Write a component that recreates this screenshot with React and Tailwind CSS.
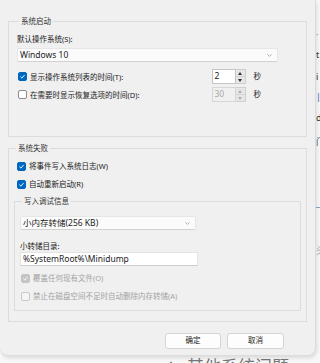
import { ChevronDown } from "lucide-react";

const font = "font-['Noto_Sans','Noto_Sans_CJK_SC',sans-serif]";

function Check({ checked, disabled }) {
  const box = checked
    ? disabled
      ? "bg-[#c4c4c4] border-[#c4c4c4]"
      : "bg-[#0067c0] border-[#0067c0]"
    : disabled
      ? "bg-[#f5f5f5] border-[#c8c8c8]"
      : "bg-white border-[#8a8a8a]";
  return (
    <span className={`flex h-[9px] w-[9px] shrink-0 items-center justify-center rounded-[2px] border ${box}`}>
      {checked && (
        <svg viewBox="0 0 10 10" className="h-[7px] w-[7px]">
          <path d="M2 5.2 L4.2 7.3 L8 2.8" fill="none" stroke="white" strokeWidth="1.3" />
        </svg>
      )}
    </span>
  );
}

function CheckRow({ label, checked, disabled, className = "" }) {
  return (
    <div className={`flex h-[10px] items-center gap-[3px] ${className}`}>
      <Check checked={checked} disabled={disabled} />
      <span className={`text-[7.5px] leading-[10px] ${disabled ? "text-[#a3a3a3]" : "text-[#1b1b1b]"}`}>{label}</span>
    </div>
  );
}

function Spin({ value, disabled }) {
  return (
    <div className="flex h-[15px]">
      <div
        className={`flex w-[24px] items-center border px-[2px] text-[8.5px] ${
          disabled ? "border-[#d6d6d6] bg-[#f0f0f0] text-[#a8a8a8]" : "border-[#c5c5c5] bg-white text-[#1b1b1b]"
        }`}
      >
        {value}
      </div>
      <div className="flex w-[10px] flex-col border border-l-0 border-[#cfcfcf] bg-[#e6e6e6]">
        <div className="flex flex-1 items-center justify-center border-b border-[#d4d4d4]">
          <span className={`h-0 w-0 border-x-[2.5px] border-b-[3px] border-x-transparent ${disabled ? "border-b-[#b0b0b0]" : "border-b-[#333]"}`} />
        </div>
        <div className="flex flex-1 items-center justify-center">
          <span className={`h-0 w-0 border-x-[2.5px] border-t-[3px] border-x-transparent ${disabled ? "border-t-[#b0b0b0]" : "border-t-[#333]"}`} />
        </div>
      </div>
    </div>
  );
}

function Select({ value, width }) {
  return (
    <div className={`flex h-[14px] ${width} items-center justify-between rounded-[2px] border border-[#e6e6e6] border-b-[#d2d2d2] bg-[#fbfbfb] pl-[2px] pr-[4px]`}>
      <span className="text-[8.5px] leading-none text-[#1b1b1b]">{value}</span>
      <ChevronDown className="h-[7px] w-[7px] text-[#777]" strokeWidth={2} />
    </div>
  );
}

function Legend({ children }) {
  return <legend className="ml-[2px] px-[2px] text-[7.5px] leading-[10px] text-[#333]">{children}</legend>;
}

export default function App() {
  return (
    <div className={`relative h-[363px] w-[320px] overflow-hidden bg-[#f8f8f8] ${font}`}>
      {/* window behind the dialog */}
      <div className="flex h-[358px]">
        <div className="w-[316px]" />
        <div className="flex w-[4px] flex-col overflow-hidden text-[9px] leading-[10px]">
          <span className="mt-[30px] text-[#999]">·</span>
          <span className="mt-[10px] text-[#333]">t</span>
          <span className="mt-[12px] text-[#333]">i</span>
          <span className="mt-[10px] text-[#2b6cb0]">|</span>
          <span className="mt-[11px] text-[#333]">d</span>
          <span className="mt-[14px] text-[#3a5a80]">门</span>
          <span className="mt-[60px] h-[1px] w-full bg-[#8aa4c0]" />
          <span className="mt-[38px] text-[#aaa]">头</span>
        </div>
      </div>
      <div className="ml-[165px] flex items-start gap-[10px] text-[#777]">
        <span className="text-[14px] leading-[18px]">✲</span>
        <span className="text-[17px] leading-[18px]">其他系统问题</span>
      </div>

      {/* dialog */}
      <div className="absolute left-0 top-0 flex h-[356px] w-[316px] flex-col rounded-b-[8px] border-r border-b border-[#dcdcdc] bg-[#f0f0f0] px-[8px] pt-[16px] shadow-[1px_2px_4px_rgba(0,0,0,0.12)]">
        <fieldset className="border border-[#dcdcdc] pb-[34px] pl-[8px]">
          <Legend>系统启动</Legend>
          <div className="mt-[8px] text-[7.5px] leading-[10px] text-[#1b1b1b]">默认操作系统(S):</div>
          <div className="mt-[4px]">
            <Select value="Windows 10" width="w-[261px]" />
          </div>
          <div className="mt-[7px] flex w-[244px] items-center pl-[1px]">
            <CheckRow label="显示操作系统列表的时间(T):" checked className="flex-1" />
            <Spin value="2" />
            <span className="ml-[8px] text-[7.5px] text-[#1b1b1b]">秒</span>
          </div>
          <div className="mt-[3px] flex w-[244px] items-center pl-[1px]">
            <CheckRow label="在需要时显示恢复选项的时间(D):" className="flex-1" />
            <Spin value="30" disabled />
            <span className="ml-[8px] text-[7.5px] text-[#1b1b1b]">秒</span>
          </div>
        </fieldset>

        <fieldset className="mt-[6px] border border-[#dcdcdc] px-[5px] pb-[10px]">
          <Legend>系统失败</Legend>
          <CheckRow label="将事件写入系统日志(W)" checked className="mt-[8px] pl-[3px]" />
          <CheckRow label="自动重新启动(R)" checked className="mt-[8px] pl-[3px]" />
          <fieldset className="mt-[7px] border border-[#dcdcdc] pb-[9px] pl-[5px]">
            <Legend>写入调试信息</Legend>
            <div className="mt-[10px]">
              <Select value="小内存转储(256 KB)" width="w-[176px]" />
            </div>
            <div className="mt-[11px] text-[7.5px] leading-[10px] text-[#1b1b1b]">小转储目录:</div>
            <div className="mt-[1px] flex h-[14px] w-[178px] items-center border border-[#e4e4e4] border-b-[#cdcdcd] bg-white px-[2px] text-[8.5px] text-[#1b1b1b]">
              %SystemRoot%\Minidump
            </div>
            <CheckRow label="覆盖任何现有文件(O)" checked disabled className="mt-[7px] pl-[1px]" />
            <CheckRow label="禁止在磁盘空间不足时自动删除内存转储(A)" disabled className="mt-[8px] pl-[1px]" />
          </fieldset>
        </fieldset>

        <div className="mt-[11px] flex justify-end gap-[6px] pr-[23px]">
          <button className="h-[16px] w-[56px] rounded-[3px] border border-[#d4d4d4] bg-[#fdfdfd] text-[7.5px] text-[#1b1b1b]">确定</button>
          <button className="h-[16px] w-[57px] rounded-[3px] border border-[#d4d4d4] bg-[#fdfdfd] text-[7.5px] text-[#1b1b1b]">取消</button>
        </div>
      </div>
    </div>
  );
}
